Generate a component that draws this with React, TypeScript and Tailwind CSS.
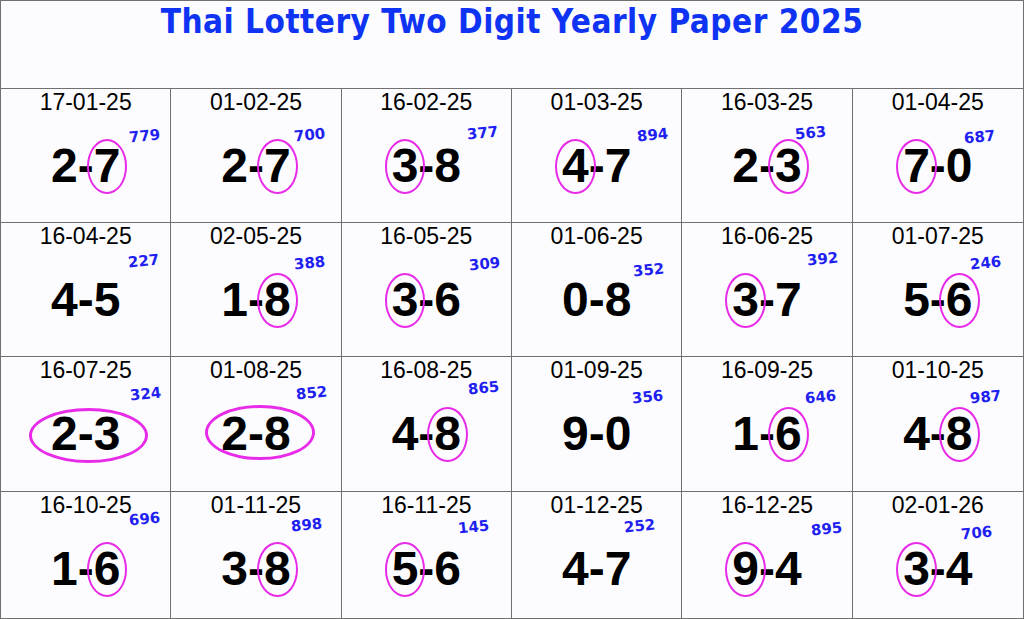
type Cell = {
  date: string;
  a: string;
  b: string;
  ring: 0 | 1 | 2 | 3;
  side: string;
  pos: string;
  wide?: string;
};

const cells: Cell[] = [
  { date: "17-01-25", a: "2", b: "7", ring: 2, side: "779", pos: "left-[128px] top-[40px]" },
  { date: "01-02-25", a: "2", b: "7", ring: 2, side: "700", pos: "left-[123px] top-[39px]" },
  { date: "16-02-25", a: "3", b: "8", ring: 1, side: "377", pos: "left-[125px] top-[37px]" },
  { date: "01-03-25", a: "4", b: "7", ring: 1, side: "894", pos: "left-[125px] top-[39px]" },
  { date: "16-03-25", a: "2", b: "3", ring: 2, side: "563", pos: "left-[113px] top-[37px]" },
  { date: "01-04-25", a: "7", b: "0", ring: 1, side: "687", pos: "left-[111px] top-[41px]" },

  { date: "16-04-25", a: "4", b: "5", ring: 0, side: "227", pos: "left-[127px] top-[31px]" },
  { date: "02-05-25", a: "1", b: "8", ring: 2, side: "388", pos: "left-[123px] top-[33px]" },
  { date: "16-05-25", a: "3", b: "6", ring: 1, side: "309", pos: "left-[127px] top-[34px]" },
  { date: "01-06-25", a: "0", b: "8", ring: 0, side: "352", pos: "left-[121px] top-[40px]" },
  { date: "16-06-25", a: "3", b: "7", ring: 1, side: "392", pos: "left-[125px] top-[29px]" },
  { date: "01-07-25", a: "5", b: "6", ring: 2, side: "246", pos: "left-[117px] top-[33px]" },

  {
    date: "16-07-25", a: "2", b: "3", ring: 3, side: "324", pos: "left-[129px] top-[30px]",
    wide: "-left-[22px] -right-[28px] -top-[2px] -bottom-[5px]",
  },
  {
    date: "01-08-25", a: "2", b: "8", ring: 3, side: "852", pos: "left-[125px] top-[29px]",
    wide: "-left-[16px] -right-[24px] -top-[5px] -bottom-[2px]",
  },
  { date: "16-08-25", a: "4", b: "8", ring: 2, side: "865", pos: "left-[126px] top-[24px]" },
  { date: "01-09-25", a: "9", b: "0", ring: 0, side: "356", pos: "left-[120px] top-[33px]" },
  { date: "16-09-25", a: "1", b: "6", ring: 2, side: "646", pos: "left-[123px] top-[33px]" },
  { date: "01-10-25", a: "4", b: "8", ring: 2, side: "987", pos: "left-[117px] top-[33px]" },

  { date: "16-10-25", a: "1", b: "6", ring: 2, side: "696", pos: "left-[128px] top-[20px]" },
  { date: "01-11-25", a: "3", b: "8", ring: 2, side: "898", pos: "left-[120px] top-[26px]" },
  { date: "16-11-25", a: "5", b: "6", ring: 1, side: "145", pos: "left-[116px] top-[28px]" },
  { date: "01-12-25", a: "4", b: "7", ring: 0, side: "252", pos: "left-[112px] top-[27px]" },
  { date: "16-12-25", a: "9", b: "4", ring: 1, side: "895", pos: "left-[129px] top-[30px]" },
  { date: "02-01-26", a: "3", b: "4", ring: 1, side: "706", pos: "left-[108px] top-[34px]" },
];

const Digit = ({ value, circled }: { value: string; circled: boolean }) => (
  <span className="relative inline-block">
    {value}
    {circled && (
      <span className="absolute -left-[7px] -right-[7px] -top-[3px] -bottom-[4px] rounded-[50%] border-2 border-[#e82be8]" />
    )}
  </span>
);

const ResultCell = ({ cell, index }: { cell: Cell; index: number }) => {
  const lastCol = index % 6 === 5;
  const lastRow = index >= 18;
  return (
    <div
      className={`relative flex flex-col items-center pt-[2px] border-[#707070] ${lastCol ? "" : "border-r"} ${
        lastRow ? "" : "border-b"
      }`}
    >
      <div className="text-[23px] leading-none text-black">{cell.date}</div>
      <div className="relative mt-[28px] text-[48px] font-bold leading-none text-black">
        <Digit value={cell.a} circled={cell.ring === 1} />
        -
        <Digit value={cell.b} circled={cell.ring === 2} />
        {cell.wide && (
          <span className={`absolute rounded-[50%] border-[3px] border-[#e82be8] ${cell.wide}`} />
        )}
      </div>
      <span
        className={`absolute ${cell.pos} -rotate-6 font-['DejaVu_Sans',sans-serif] text-[15px] font-bold leading-none text-[#1f1ff0]`}
      >
        {cell.side}
      </span>
    </div>
  );
};

export default function App() {
  return (
    <div className="flex h-[619px] w-[1024px] flex-col border border-[#707070] bg-[#fcfcfe] font-['Liberation_Sans',Arial,sans-serif]">
      <div className="h-[88px] shrink-0 border-b border-[#707070] pt-[4px] text-center">
        <h1 className="font-['DejaVu_Sans_Condensed','DejaVu_Sans',sans-serif] text-[33px] font-bold leading-none tracking-[0.5px] text-[#0f33f2] font-stretch-condensed">
          Thai Lottery Two Digit Yearly Paper 2025
        </h1>
      </div>
      <div className="grid flex-1 grid-cols-6 grid-rows-[134px_134px_135px_1fr]">
        {cells.map((c, i) => (
          <ResultCell key={c.date} cell={c} index={i} />
        ))}
      </div>
    </div>
  );
}
